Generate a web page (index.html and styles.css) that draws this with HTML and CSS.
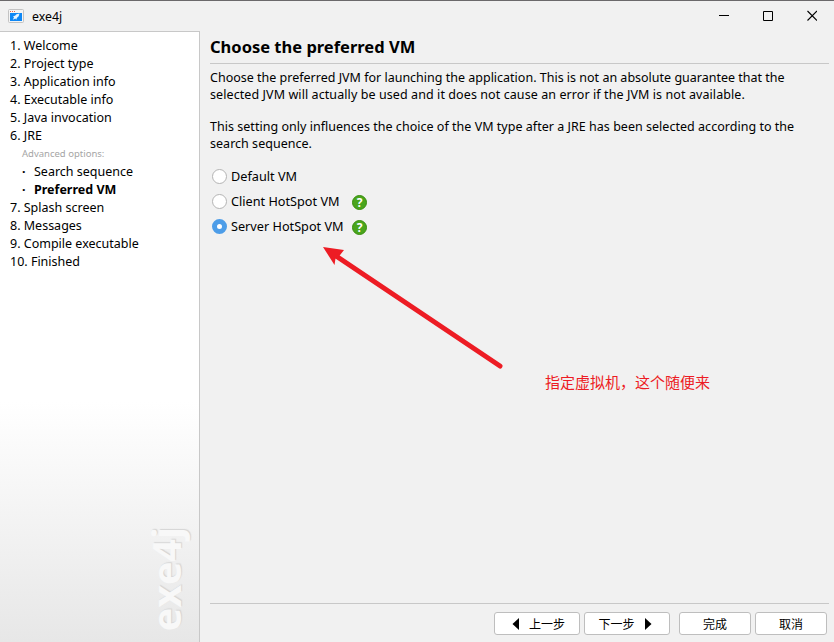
FILE: index.html
```
<!DOCTYPE html>
<html lang="zh-CN">
<head>
<meta charset="utf-8">
<title>exe4j</title>
<link rel="stylesheet" href="styles.css">
</head>
<body>
<div class="window">
  <header class="titlebar">
    <svg class="app-icon" width="16" height="14" viewBox="0 0 16 14"><rect x=".5" y=".5" width="15" height="13" rx="1" fill="#f4f4f4" stroke="#c3c3c3"/><path d="M2 2h1v1H2zM4 2h1v1H4zM6 2h1v1H6z" fill="#e8694a"/><path d="M2 4h12v8H2z" fill="#1088f5"/><path d="M11.500 4.500 8.500 5.300 7 6.800 5 7.200l1 1-1.200 2.600 2.600-1.200.8 1.200.8-2 1.700-1.500z" fill="#e9f5ff"/></svg>
    <span class="app-name">exe4j</span>
    <svg class="controls" width="98" height="12" viewBox="0 0 98 12" fill="none" stroke="#000"><path d="M0 5.500h10M44.500 1.500h9v9h-9z"/><path d="m88.500 1 9.500 9.500m0-9.500-9.500 9.500" stroke-width="1.100"/></svg>
  </header>
  <div class="body">
    <nav class="sidebar">
      <ul class="steps">
        <li>1. Welcome</li>
        <li>2. Project type</li>
        <li>3. Application info</li>
        <li>4. Executable info</li>
        <li>5. Java invocation</li>
        <li>6. JRE</li>
        <li class="advanced">Advanced options:</li>
        <li class="sub">Search sequence</li>
        <li class="sub current">Preferred VM</li>
        <li>7. Splash screen</li>
        <li>8. Messages</li>
        <li>9. Compile executable</li>
        <li>10. Finished</li>
      </ul>
      <div class="brand">exe4j</div>
    </nav>
    <main class="content">
      <h1>Choose the preferred VM</h1>
      <p>Choose the preferred JVM for launching the application. This is not an absolute guarantee that the<br><span class="loose">selected JVM will actually be used and it does not cause an error if the JVM is not available.</span></p>
      <p class="second">This setting only influences the choice of the VM type after a JRE has been selected according to the<br>search sequence.</p>
      <div class="options">
        <div class="option"><i class="radio"></i><span>Default VM</span></div>
        <div class="option"><i class="radio"></i><span class="wide">Client HotSpot VM</span><b class="help">?</b></div>
        <div class="option"><i class="radio checked"></i><span class="wide">Server HotSpot VM</span><b class="help">?</b></div>
      </div>
      <footer class="buttons">
        <div class="button nav-button back"><svg width="7" height="12" viewBox="0 0 7 12"><path d="M7 0v12L.5 6z"/></svg><span>上一步</span></div>
        <div class="button nav-button next"><span>下一步</span><svg width="7" height="12" viewBox="0 0 7 12"><path d="M0 0v12l6.500-6z"/></svg></div>
        <div class="button finish">完成</div>
        <div class="button">取消</div>
      </footer>
    </main>
  </div>
  <svg class="arrow" width="182" height="125" viewBox="0 0 182 125"><path d="M13 9 177 119" stroke="#ed1c24" stroke-width="5" stroke-linecap="round"/><path d="m0 0 21 3-5.500 7-3 1.500L11.500 18z" fill="#ed1c24"/></svg>
  <div class="note">指定虚拟机，这个随便来</div>
</div>
</body>
</html>
```
FILE: styles.css
```
* { box-sizing: border-box; }
body {
  margin: 0;
  font-family: "Noto Sans", "Noto Sans CJK SC", sans-serif;
  font-size: 12.5px;
  color: #000;
}
.window {
  position: relative;
  width: 834px;
  height: 642px;
  overflow: hidden;
  background: #f1f1f1;
  border-top: 1px solid #6b696b;
  display: flex;
  flex-direction: column;
}
.titlebar {
  height: 30px;
  flex: none;
  display: flex;
  align-items: center;
  padding: 0 17px 0 8px;
}
.app-name { margin: 1px 0 0 8px; font-size: 12.3px; line-height: 18px; }
.controls { margin-left: auto; }
.body { flex: 1; display: flex; min-height: 0; }
.sidebar {
  width: 200px;
  border-top: 1px solid #c8c8c8;
  border-right: 1px solid #c8c8c8;
  background: linear-gradient(#fff 0, #fff 370px, #e7e7e7 610px);
  display: flex;
  flex-direction: column;
  justify-content: space-between;
}
.steps { list-style: none; margin: 0; padding: 5px 0 0 10px; }
.steps li { height: 18px; line-height: 18px; white-space: nowrap; }
.steps .advanced { padding-left: 12px; font-size: 9.5px; color: #a5a5a5; }
.steps .sub { padding-left: 12px; display: flex; }
.steps .sub::before { content: "·"; width: 12px; font-weight: bold; }
.steps .current { font-weight: bold; }
.brand {
  align-self: flex-end;
  margin: 0 11px 11px 0;
  writing-mode: vertical-rl;
  transform: rotate(180deg);
  font: bold 39.5px/44px "Open Sans", sans-serif;
  color: #f8f8f8;
  text-shadow: 1px 1px 1px #d4d4d4;
}
.content {
  flex: 1;
  display: flex;
  flex-direction: column;
  padding: 0 5px 6px 10px;
}
h1 {
  margin: 0 0 5px;
  height: 33px;
  border-bottom: 1px solid #c8c8c8;
  font-size: 16.5px;
  line-height: 32px;
}
p { margin: 0 0 15px; line-height: 17px; white-space: nowrap; }
.loose { letter-spacing: .085px; }
.second { letter-spacing: .025px; }
.options { margin-top: -3px; padding-left: 2px; font-size: 12.7px; }
.option { height: 25px; display: flex; align-items: center; }
.option span { margin-top: -1px; }
.option .wide { width: 121px; white-space: nowrap; }
.radio {
  width: 15px;
  height: 15px;
  margin-right: 4px;
  border: 1px solid #b4b4b4;
  border-radius: 50%;
  background: #fff;
}
.radio.checked { border: 5px solid #4d9de8; }
.help {
  width: 15px;
  height: 15px;
  margin-top: 1px;
  border-radius: 50%;
  background: #4aa51c;
  border: 1px solid #388e0c;
  color: #fff;
  font-size: 12px;
  line-height: 13px;
  text-align: center;
}
.buttons {
  margin-top: auto;
  border-top: 1px solid #c8c8c8;
  height: 33px;
  padding: 8px 2px 0 0;
  display: flex;
  justify-content: flex-end;
  gap: 4px;
  font-size: 12px;
}
.button {
  width: 72px;
  height: 23px;
  border: 1px solid #bebebe;
  border-radius: 3px;
  background: #fff;
  display: flex;
  align-items: center;
  justify-content: center;
  gap: 10px;
}
.nav-button { width: 86px; }
.back { padding-left: 3px; }
.next { padding-right: 4px; }
.finish { margin-left: 5px; }
.arrow { position: absolute; left: 323px; top: 246px; }
.note {
  position: absolute;
  left: 545px;
  top: 370px;
  font-size: 15px;
  line-height: 22px;
  color: #ed1c24;
  white-space: nowrap;
}
```
